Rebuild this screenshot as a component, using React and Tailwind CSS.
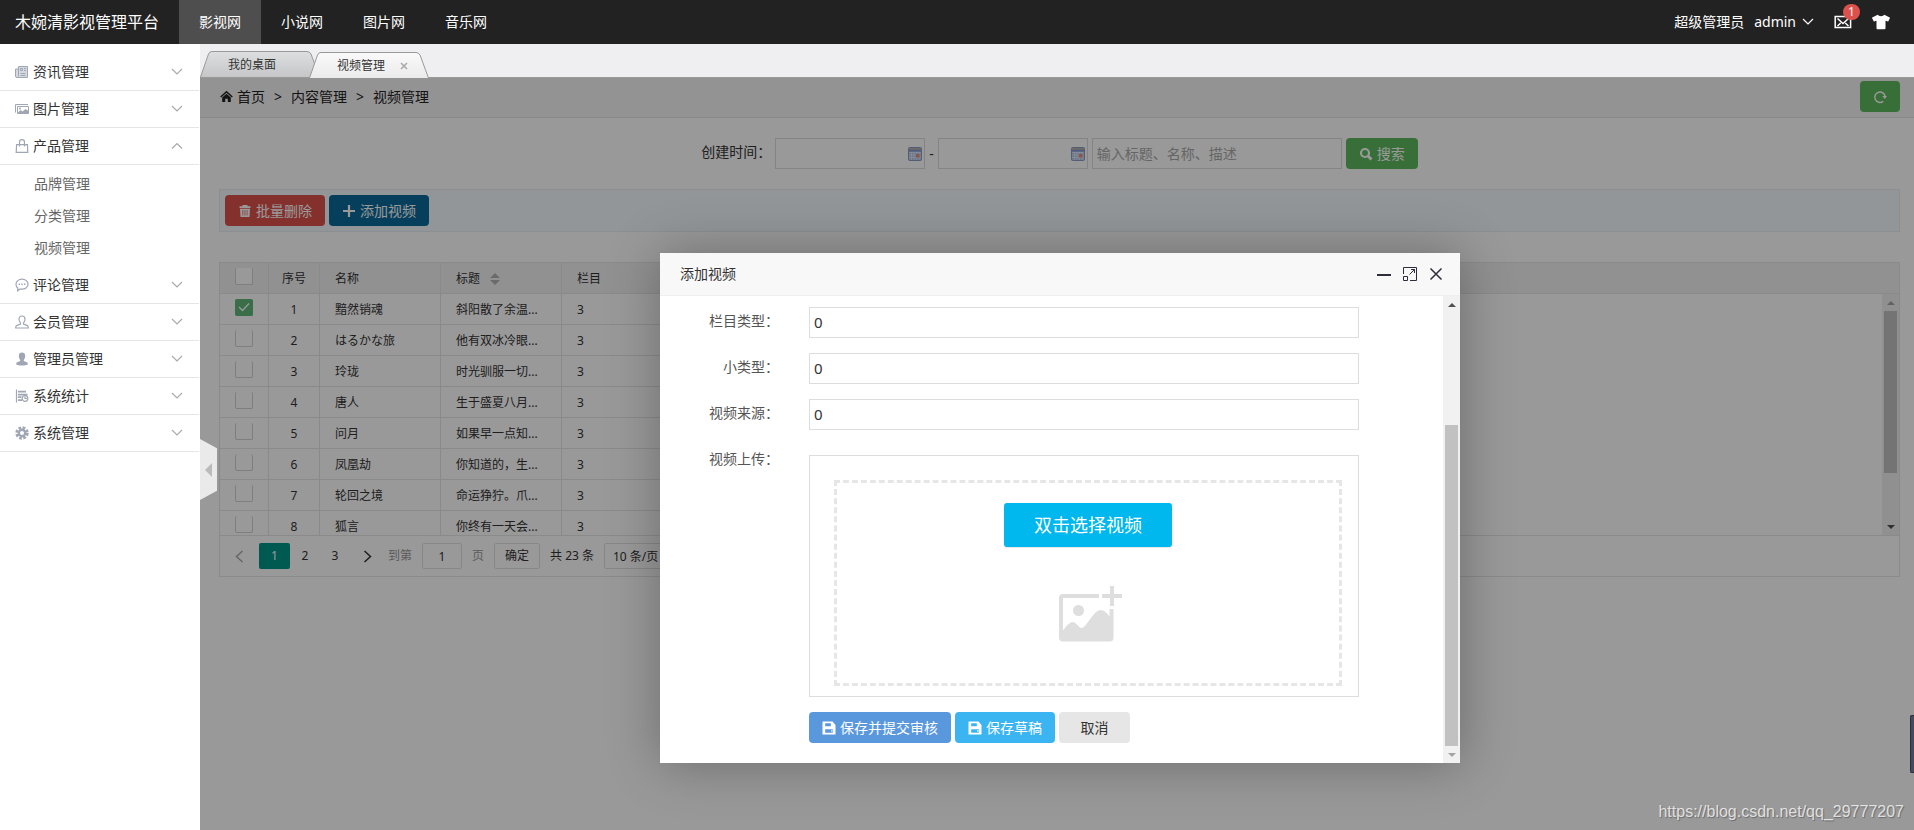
import { useState } from 'react';
import { FaTshirt } from 'react-icons/fa';

const SITES = ['影视网', '小说网', '图片网', '音乐网'];

const MENU = [
  { name: '资讯管理', icon: NewsIcon },
  { name: '图片管理', icon: PictureIcon },
  { name: '产品管理', icon: BagIcon, children: ['品牌管理', '分类管理', '视频管理'] },
  { name: '评论管理', icon: CommentIcon },
  { name: '会员管理', icon: MemberIcon },
  { name: '管理员管理', icon: AdminIcon },
  { name: '系统统计', icon: StatsIcon },
  { name: '系统管理', icon: GearIcon },
];

const VIDEOS = [
  { name: '黯然销魂', title: '斜阳散了余温...', column: 3 },
  { name: 'はるかな旅', title: '他有双冰冷眼...', column: 3 },
  { name: '玲珑', title: '时光驯服一切...', column: 3 },
  { name: '唐人', title: '生于盛夏八月...', column: 3 },
  { name: '问月', title: '如果早一点知...', column: 3 },
  { name: '凤凰劫', title: '你知道的，生...', column: 3 },
  { name: '轮回之境', title: '命运狰狞。爪...', column: 3 },
  { name: '狐言', title: '你终有一天会...', column: 3 },
];

const FIELDS = [
  { id: 'column-type', label: '栏目类型：' },
  { id: 'sub-type', label: '小类型：' },
  { id: 'video-source', label: '视频来源：' },
];

/* ---------- icons ---------- */

function NewsIcon() {
  return (
    <svg width="14" height="14" viewBox="0 0 14 14" fill="none" stroke="currentColor" aria-hidden="true">
      <path d="M3.500 1.500h9v11H2A1.500 1.500 0 0 1 .500 11V4h3z" fill="#d5d9e0" />
      <path d="M3.500 4v7.500M5.500 8.500h5M5.500 10.500h5M9 3.500h2M9 5.500h2" />
      <path d="M5.500 3.500h2v2h-2z" />
    </svg>
  );
}

function PictureIcon() {
  return (
    <svg width="14" height="14" viewBox="0 0 14 14" fill="none" stroke="currentColor" aria-hidden="true">
      <path d="M.500 10.500v-8h12.500" />
      <path d="M2.500 4.500h11v7h-11z" />
      <path d="M3 10.500l2.500-2.500 2 1.500L10.500 7 13.500 9v2.500H3z" fill="currentColor" stroke="none" />
      <circle cx="5" cy="6.500" r="1" fill="currentColor" stroke="none" />
    </svg>
  );
}

function BagIcon() {
  return (
    <svg width="14" height="14" viewBox="0 0 14 14" fill="none" stroke="currentColor" strokeWidth="1.200" aria-hidden="true">
      <path d="M1.600 5.600h10.800l.400 7.800H1.200z" />
      <path d="M4.500 7.500V3.200a2.500 2.500 0 0 1 5 0v4.300" />
    </svg>
  );
}

function CommentIcon() {
  return (
    <svg width="14" height="14" viewBox="0 0 14 14" fill="none" stroke="currentColor" strokeWidth="1.200" aria-hidden="true">
      <path d="M7 1.200c3.400 0 6 2.200 6 5s-2.600 5-6 5c-.6 0-1.200-.1-1.800-.2L2.600 12.800l.2-2.700C1.600 9.200 1 7.800 1 6.200c0-2.800 2.600-5 6-5z" />
      <path d="M3.600 6.300h1.400M6.300 6.300h1.400M9 6.300h1.400" strokeWidth="1.500" />
    </svg>
  );
}

function MemberIcon() {
  return (
    <svg width="14" height="14" viewBox="0 0 14 14" fill="none" stroke="currentColor" strokeWidth="1.200" aria-hidden="true">
      <path d="M5.500 8C4.300 6.800 4 5.500 4 4c0-1.800 1.200-3 3-3s3 1.200 3 3c0 1.500-.3 2.800-1.500 4v1l4 1.600c.6.3.8 1 .8 2.400H.7c0-1.400.2-2.100.8-2.400L5.500 9z" />
    </svg>
  );
}

function AdminIcon() {
  return (
    <svg width="14" height="14" viewBox="0 0 14 14" fill="currentColor" aria-hidden="true">
      <path d="M5.200 8C4.300 6.900 3.800 5.500 3.800 3.800 3.800 1.800 5.200.6 7 .6s3.200 1.200 3.200 3.200c0 1.700-.5 3.100-1.400 4.200v1l3 1.200c.8.4 1 1.200 1 2.200-1.400.8-3.500 1.100-5.800 1.100s-4.400-.3-5.800-1.100c0-1 .2-1.800 1-2.200l3-1.200z" />
    </svg>
  );
}

function StatsIcon() {
  return (
    <svg width="14" height="14" viewBox="0 0 14 14" fill="none" stroke="currentColor" strokeWidth="1.200" aria-hidden="true">
      <path d="M1.500.5v13" />
      <path d="M3 2.700h8M3 5.700h9.500M3 8.200h3.500M3 11.200h4" strokeWidth="1.700" />
      <circle cx="10" cy="9.500" r="2.800" />
      <path d="M10 7.500v2h2" />
    </svg>
  );
}

function GearIcon() {
  return (
    <svg width="14" height="14" viewBox="0 0 14 14" fill="none" stroke="currentColor" aria-hidden="true">
      <circle cx="7" cy="7" r="5.200" strokeWidth="3" strokeDasharray="2.600 1.484" />
      <circle cx="7" cy="7" r="3.200" strokeWidth="2.400" />
    </svg>
  );
}

function Chevron({ up = false }) {
  return (
    <svg width="12" height="8" viewBox="0 0 12 8" fill="none" stroke="currentColor" strokeWidth="1.200" aria-hidden="true">
      <path d={up ? 'M1 6.500l5-5 5 5' : 'M1 1l5 5 5-5'} />
    </svg>
  );
}

function HomeIcon() {
  return (
    <svg width="13" height="13" viewBox="0 0 13 13" fill="currentColor" aria-hidden="true">
      <path d="M6.500.8l6.300 5.700-1 1-5.300-4.700L1.200 7.500l-1-1z" />
      <path d="M6.500 3.800l4.300 3.800V12H7.800V8.800H5.200V12H2.200V7.600z" />
    </svg>
  );
}

function TrashIcon() {
  return (
    <svg width="14" height="14" viewBox="0 0 14 14" fill="currentColor" aria-hidden="true">
      <path d="M1.500 4V2.300h3V1h5v1.300h3V4z" />
      <path fillRule="evenodd" d="M2 4.700h10l-.5 8.300h-9zM4.500 6v5.500h.7V6zm2.100 0v5.500h.7V6zm2.100 0v5.500h.7V6z" />
    </svg>
  );
}

function PlusIcon() {
  return (
    <svg width="14" height="14" viewBox="0 0 14 14" fill="none" stroke="currentColor" strokeWidth="2.200" aria-hidden="true">
      <path d="M7 1v12M1 7h12" />
    </svg>
  );
}

function SearchIcon() {
  return (
    <svg width="14" height="14" viewBox="0 0 14 14" fill="none" stroke="currentColor" strokeWidth="2.200" aria-hidden="true">
      <circle cx="6" cy="6" r="4" />
      <path d="M9 9l3.500 3.500" strokeWidth="2.800" />
    </svg>
  );
}

function RefreshIcon() {
  return (
    <svg width="14" height="14" viewBox="0 0 14 14" fill="none" stroke="currentColor" strokeWidth="1.500" aria-hidden="true">
      <path d="M10.200 11.300A5.200 5.200 0 1 1 12.200 7" />
      <path d="M9.300 6h4.700l-2.200 3z" fill="currentColor" stroke="none" />
    </svg>
  );
}

function SaveIcon() {
  return (
    <svg width="14" height="14" viewBox="0 0 14 14" fill="currentColor" aria-hidden="true">
      <path fillRule="evenodd" d="M1 .5h9.500L13.500 4v9.500H.5V1zM3.200 2.300v2.900h5.600V2.300zM3.200 8.200v3.500h7.600V8.200zM9.300 9h1v1.800h-1z" />
    </svg>
  );
}

function CalendarIcon() {
  return (
    <svg width="14" height="14" viewBox="0 0 14 14" className="shrink-0" aria-hidden="true">
      <rect x=".5" y=".5" width="13" height="13" rx="1" fill="#b4c6e8" stroke="#8c9cc0" />
      <path d="M1 1h12v2H1z" fill="#b5b0ae" />
      <path d="M1 3h12v1.500H1z" fill="#7f98d0" />
      <path d="M1 5.500h12M1 8h12M1 10.500h12M3.500 5v8M6 5v8M8.500 5v8M11 5v8" stroke="#e2ebfa" strokeWidth=".8" />
      <path d="M8 7h3.500v3.500H8z" fill="#e0907a" />
    </svg>
  );
}

function MailIcon() {
  return (
    <svg width="18" height="14" viewBox="0 0 18 14" fill="none" stroke="currentColor" strokeWidth="1.500" aria-hidden="true">
      <path d="M1.200 1.500h15.400v11H1.200z" />
      <path d="M3.500 3.500L9 8.500l5.500-5M3.500 11l3.200-3M14.500 11l-3.200-3" />
    </svg>
  );
}

function AddPictureIcon() {
  return (
    <svg width="64" height="56" viewBox="0 0 64 56" fill="#dedede" aria-hidden="true">
      <path d="M3.500 8H40v4H4v32.500c3-4 6.500-8.500 9.500-8.500 4 0 6 6 9 6 5 0 12-18 19-18 4 0 6.500 3 9 6.500V23h4v29c0 2-1 3.500-3.500 3.500h-47C1.500 55.500 0 54 0 52V11.500C0 9.500 1.500 8 3.500 8z" />
      <circle cx="19.500" cy="24.500" r="5.500" />
      <path d="M51 0h4v8h8v4h-8v8h-4v-8h-8V8h8z" />
    </svg>
  );
}

/* ---------- shared bits ---------- */

function Button({ className, children, ...rest }) {
  return (
    <button
      type="button"
      className={`flex h-[31px] items-center gap-1 rounded px-[13px] text-sm ${className}`}
      {...rest}
    >
      {children}
    </button>
  );
}

function ScrollTrack({ children }) {
  return (
    <div className="flex w-[17px] shrink-0 flex-col items-center bg-[#f1f1f1]" aria-hidden="true">
      {children}
    </div>
  );
}

function ScrollArrow({ down = false, className }) {
  return (
    <span className={`flex h-[17px] shrink-0 items-center justify-center ${className}`}>
      <svg width="8" height="4" viewBox="0 0 8 4" fill="currentColor">
        <path d={down ? 'M0 0h8L4 4z' : 'M0 4h8L4 0z'} />
      </svg>
    </span>
  );
}

function Check({ label, checked, onChange }) {
  return (
    <label className="mx-auto grid w-[18px]">
      <input
        type="checkbox"
        aria-label={label}
        checked={checked}
        onChange={onChange}
        className="col-start-1 row-start-1 h-[17px] w-[18px] appearance-none rounded-xs border border-t-0 border-[#d2d2d2] bg-white checked:border-[#5fb878] checked:bg-[#5fb878]"
      />
      {checked && (
        <svg className="pointer-events-none col-start-1 row-start-1 text-white" width="18" height="17" viewBox="0 0 18 17" fill="none" stroke="currentColor" strokeWidth="1.300" aria-hidden="true">
          <path d="M4 8l3.500 3.500L14 4.500" />
        </svg>
      )}
    </label>
  );
}

/* ---------- page parts ---------- */

function Header() {
  return (
    <header className="flex h-11 items-center bg-[#222] pl-[15px] pr-6 text-sm text-white">
      <a href="#" className="mr-5 text-base">木婉清影视管理平台</a>
      <nav className="flex h-full flex-1">
        {SITES.map((site, i) => (
          <a
            key={site}
            href="#"
            className={`flex items-center px-5 ${i === 0 ? 'bg-[#4e4e4e]' : ''}`}
          >
            {site}
          </a>
        ))}
      </nav>
      <div className="flex items-center">
        <span>超级管理员</span>
        <button type="button" className="ml-2.5 flex items-center gap-1.5">
          admin <Chevron />
        </button>
        <a href="#" aria-label="消息" className="relative ml-5">
          <MailIcon />
          <span className="absolute -top-[11px] left-[9px] flex h-4 w-[17px] items-center justify-center rounded-full bg-[#dd514c] text-xs">1</span>
        </a>
        <button type="button" aria-label="换肤" className="ml-5">
          <FaTshirt size={18} />
        </button>
      </div>
    </header>
  );
}

function Sidebar() {
  return (
    <aside className="w-[200px] shrink-0 bg-white pr-px pt-2.5 text-sm text-[#333]">
      {MENU.map(({ name, icon: Icon, children }) => (
        <div key={name}>
          <button type="button" className="flex h-[37px] w-full items-center border-b border-[#e5e5e5] pl-[15px] pr-4">
            <span className="mr-1 text-[#a0a6b3]"><Icon /></span>
            <span className="flex-1 text-left">{name}</span>
            <span className="text-[#aaa]"><Chevron up={Boolean(children)} /></span>
          </button>
          {children && (
            <ul className="py-[3px]">
              {children.map((child) => (
                <li key={child}>
                  <a href="#" className="flex h-8 items-center pl-[34px] text-[#666]">{child}</a>
                </li>
              ))}
            </ul>
          )}
        </div>
      ))}
    </aside>
  );
}

function Tab({ name, active = false }) {
  return (
    <li className={`relative flex h-[26px] w-[120px] items-center pl-7 pt-0.5 ${active ? '-mb-px -ml-[11px]' : ''}`}>
      <svg className="absolute inset-0" width="120" height="26" viewBox="0 0 120 26" aria-hidden="true">
        <defs>
          <linearGradient id={active ? 'tab-on' : 'tab-off'} x1="0" y1="0" x2="0" y2="1">
            <stop offset="0" stopColor={active ? '#fafafa' : '#dcdfdf'} />
            <stop offset="1" stopColor={active ? '#ebebeb' : '#c6c6c8'} />
          </linearGradient>
        </defs>
        <path
          d="M.500 26L8.500 3Q9.500.500 12 .500H107Q109.500.500 111 3L119.500 26"
          fill={active ? 'url(#tab-on)' : 'url(#tab-off)'}
          stroke="#999"
        />
      </svg>
      <a href="#" className="relative text-xs text-[#333]">{name}</a>
      {active && (
        <button type="button" aria-label="关闭标签" className="relative ml-[15px] text-[#aaa]">
          <svg width="8" height="8" viewBox="0 0 8 8" fill="none" stroke="currentColor" strokeWidth="1.600">
            <path d="M1 1l6 6M7 1L1 7" />
          </svg>
        </button>
      )}
    </li>
  );
}

function Breadcrumb() {
  return (
    <nav className="flex h-10 items-center border-b border-[#e5e5e5] bg-[#f5f5f5] pb-0.5 pl-5 pr-3.5 text-sm text-[#222]">
      <a href="#" className="flex items-center gap-1"><HomeIcon />首页</a>
      <span className="mx-[9px]">&gt;</span>
      <a href="#">内容管理</a>
      <span className="mx-[9px]">&gt;</span>
      <span className="flex-1">视频管理</span>
      <Button aria-label="刷新" className="bg-[#5eb95e] text-white"><RefreshIcon /></Button>
    </nav>
  );
}

function DateInput({ id, label }) {
  return (
    <div className="flex h-[31px] w-[150px] items-center border border-[#ddd] px-0.5">
      <input id={id} type="text" aria-label={label} className="min-w-0 flex-1 text-sm outline-none" />
      <CalendarIcon />
    </div>
  );
}

function SearchBar() {
  return (
    <form className="flex justify-center gap-1 text-sm text-[#333]">
      <label htmlFor="date-from" className="leading-[27px]">创建时间：</label>
      <DateInput id="date-from" label="开始时间" />
      <span className="leading-[31px]">-</span>
      <DateInput id="date-to" label="结束时间" />
      <input
        type="text"
        aria-label="关键字"
        placeholder="输入标题、名称、描述"
        className="h-[31px] w-[250px] border border-[#ddd] px-1 placeholder:text-[#a9a9a9]"
      />
      <Button className="bg-[#5eb95e] text-white"><SearchIcon />搜索</Button>
    </form>
  );
}

function Columns() {
  return (
    <colgroup>
      <col className="w-[49px]" />
      <col className="w-[51px]" />
      <col className="w-[121px]" />
      <col className="w-[121px]" />
      <col className="w-[121px]" />
    </colgroup>
  );
}

function VideoTable() {
  const [selected, setSelected] = useState([0]);
  const all = selected.length === VIDEOS.length;

  const toggle = (i) =>
    setSelected(selected.includes(i) ? selected.filter((n) => n !== i) : [...selected, i]);

  const head = 'h-[30px] border-r border-[#e6e6e6] px-[15px] pt-0.5 text-left font-normal';
  const cell = 'h-[31px] border-b border-r border-[#e6e6e6] px-[15px] pt-0.5';

  return (
    <div className="mt-[30px] border border-[#e6e6e6] text-xs text-[#333]">
      <div className="border-b border-[#e6e6e6] bg-[#f2f2f2]">
        <table className="w-[463px] table-fixed border-separate border-spacing-0">
          <Columns />
          <thead>
            <tr>
              <th className="border-r border-[#e6e6e6] pt-[5px] align-top">
                <Check
                  label="全选"
                  checked={all}
                  onChange={() => setSelected(all ? [] : VIDEOS.map((_, i) => i))}
                />
              </th>
              <th className="h-[30px] border-r border-[#e6e6e6] pt-0.5 font-normal">序号</th>
              <th className={head}>名称</th>
              <th className={head}>
                <span className="flex items-center gap-2.5">
                  标题
                  <svg width="10" height="12" viewBox="0 0 10 12" fill="#b2b2b2" aria-hidden="true">
                    <path d="M0 5h10L5 0zM0 7h10l-5 5z" />
                  </svg>
                </span>
              </th>
              <th className={head}>栏目</th>
            </tr>
          </thead>
        </table>
      </div>
      <div className="flex h-[241px]">
        <div className="min-w-0 flex-1 overflow-hidden">
          <table className="w-[463px] table-fixed border-separate border-spacing-0">
            <Columns />
            <tbody>
              {VIDEOS.map((video, i) => (
                <tr key={video.name}>
                  <td className="border-b border-r border-[#e6e6e6] pt-[5px] align-top">
                    <Check label={`选择 ${video.name}`} checked={selected.includes(i)} onChange={() => toggle(i)} />
                  </td>
                  <td className="h-[31px] border-b border-r border-[#e6e6e6] pt-0.5 text-center">{i + 1}</td>
                  <td className={cell}>{video.name}</td>
                  <td className={cell}>{video.title}</td>
                  <td className={cell}>{video.column}</td>
                </tr>
              ))}
            </tbody>
          </table>
        </div>
        <ScrollTrack>
          <ScrollArrow className="text-[#a3a3a3]" />
          <span className="h-[162px] w-[13px] bg-[#c1c1c1]" />
          <span className="flex-1" />
          <ScrollArrow down className="text-[#505050]" />
        </ScrollTrack>
      </div>
      <Pager />
    </div>
  );
}

function Pager() {
  return (
    <div className="flex h-[41px] items-center gap-2.5 border-t border-[#e6e6e6]">
      <div className="flex h-[26px]">
        <button type="button" aria-label="上一页" className="flex w-[39px] items-center justify-center text-[#aaa]">
          <svg width="9" height="13" viewBox="0 0 9 13" fill="none" stroke="currentColor" strokeWidth="1.500"><path d="M7.500 1L1.500 6.500l6 5.500" /></svg>
        </button>
        <button type="button" className="w-[31px] rounded-xs bg-[#009688] text-white">1</button>
        <button type="button" className="w-[30px]">2</button>
        <button type="button" className="w-[30px]">3</button>
        <button type="button" aria-label="下一页" className="flex w-7 items-center justify-end pr-1.5">
          <svg width="9" height="13" viewBox="0 0 9 13" fill="none" stroke="currentColor" strokeWidth="1.500"><path d="M1.500 1l6 5.500-6 5.500" /></svg>
        </button>
      </div>
      <label htmlFor="page-no" className="text-[#999]">到第</label>
      <input id="page-no" type="text" defaultValue="1" className="h-[26px] w-10 rounded-xs border border-[#e2e2e2] text-center" />
      <span className="text-[#999]">页</span>
      <button type="button" className="h-[26px] w-[46px] rounded-xs border border-[#e2e2e2]">确定</button>
      <span>共 23 条</span>
      <select aria-label="每页条数" className="h-[26px] rounded-xs border border-[#e2e2e2] px-1">
        <option>10 条/页</option>
        <option>20 条/页</option>
        <option>50 条/页</option>
      </select>
    </div>
  );
}

function AddVideoDialog({ onClose }) {
  return (
    <section
      role="dialog"
      aria-labelledby="dialog-title"
      className="w-[800px] self-start bg-white text-sm text-[#333] shadow-[1px_1px_50px_rgba(0,0,0,0.3)]"
    >
      <header className="flex h-[43px] items-center gap-3 border-b border-[#eee] bg-[#f8f8f8] pl-5 pr-[17px] text-[#2e2d3c]">
        <h2 id="dialog-title" className="flex-1 text-[#333]">添加视频</h2>
        <button type="button" aria-label="最小化">
          <svg width="14" height="14" viewBox="0 0 14 14" fill="currentColor"><path d="M0 7h14v2H0z" /></svg>
        </button>
        <button type="button" aria-label="最大化">
          <svg width="14" height="14" viewBox="0 0 14 14" fill="none" stroke="currentColor">
            <path d="M.5 7V.5h13v13H7M.5 9.500h4v4h-4zM6.500 7.500l5-5M8 2.500h3.500V6" />
          </svg>
        </button>
        <button type="button" aria-label="关闭" onClick={onClose}>
          <svg width="14" height="14" viewBox="0 0 14 14" fill="none" stroke="currentColor" strokeWidth="1.500"><path d="M1.500 1.500l11 11M12.500 1.500l-11 11" /></svg>
        </button>
      </header>
      <div className="flex">
        <form className="flex flex-1 flex-col gap-[15px] pb-5 pr-[84px] pt-[11px]">
          {FIELDS.map(({ id, label }) => (
            <div key={id} className="flex gap-[30px]">
              <label htmlFor={id} className="w-[119px] text-right leading-7 text-[#555]">{label}</label>
              <input id={id} type="text" defaultValue="0" className="h-[31px] min-w-0 flex-1 border border-[#ddd] px-1 pb-0.5 text-[15px]" />
            </div>
          ))}
          <div className="flex gap-[30px]">
            <span className="w-[119px] text-right leading-7 text-[#555]">视频上传：</span>
            <div className="mt-2.5 flex-1 border border-[#ddd] pb-2.5 pl-6 pr-4 pt-6">
              <div className="flex h-[206px] flex-col items-center border-[3px] border-dashed border-[#e6e6e6] pt-5">
                <button type="button" className="h-11 w-[168px] rounded-[3px] bg-[#00b7ee] text-lg text-white shadow-[0_1px_1px_rgba(0,0,0,0.1)]">
                  双击选择视频
                </button>
                <div className="pl-1.5 pt-[39px]"><AddPictureIcon /></div>
              </div>
            </div>
          </div>
          <div className="flex gap-1 pl-[149px]">
            <Button className="bg-[#5a98de] text-white"><SaveIcon />保存并提交审核</Button>
            <Button className="bg-[#3bb4f2] text-white"><SaveIcon />保存草稿</Button>
            <Button className="w-[71px] justify-center bg-[#e6e6e6]" onClick={onClose}>取消</Button>
          </div>
        </form>
        <ScrollTrack>
          <ScrollArrow className="text-[#505050]" />
          <span className="flex-1" />
          <span className="h-[321px] w-[13px] bg-[#c1c1c1]" />
          <ScrollArrow down className="text-[#a3a3a3]" />
        </ScrollTrack>
      </div>
    </section>
  );
}

export default function App() {
  const [adding, setAdding] = useState(true);

  return (
    <div className="relative flex min-h-screen flex-col overflow-hidden font-['Noto_Sans','Noto_Sans_CJK_SC',sans-serif]">
      <Header />
      <div className="flex flex-1">
        <Sidebar />
        <div className="relative flex min-w-0 flex-1 flex-col">
          <ul className="flex h-[34px] items-end border-b border-[#999] bg-[#efeef0]">
            <Tab name="我的桌面" />
            <Tab name="视频管理" active />
          </ul>
          <main className="relative flex-1 bg-white">
            <Breadcrumb />
            <div className="pb-10 pl-[19px] pr-3.5 pt-5">
              <SearchBar />
              <div className="mt-5 flex gap-1 border border-[#e8eef2] bg-[#f5fafe] p-[5px]">
                <Button className="bg-[#dd514c] text-white"><TrashIcon />批量删除</Button>
                <Button className="bg-[#0a6999] text-white" onClick={() => setAdding(true)}><PlusIcon />添加视频</Button>
              </div>
              <VideoTable />
            </div>
            {adding && (
              <div className="absolute inset-0 flex justify-center overflow-hidden bg-black/40 pl-5 pr-3.5 pt-[175px]">
                <AddVideoDialog onClose={() => setAdding(false)} />
              </div>
            )}
          </main>
          <button
            type="button"
            aria-label="收起菜单"
            className="absolute left-0 top-[395px] flex h-[61px] w-[17px] items-center justify-center bg-[#eaeaea] text-[#bbb] [clip-path:polygon(0_0,100%_15%,100%_85%,0_100%)]"
          >
            <svg width="7" height="14" viewBox="0 0 7 14" fill="currentColor"><path d="M7 0v14L0 7z" /></svg>
          </button>
        </div>
      </div>
      <span className="absolute bottom-[57px] right-0 h-[58px] w-1 rounded-l-xs border border-r-0 border-[#2c2e3c] bg-[#464a5e]" />
      <span className="absolute bottom-1.5 right-2.5 font-['Liberation_Sans',sans-serif] text-base text-white/75 [text-shadow:1px_1px_1px_rgba(0,0,0,0.3)]">
        https://blog.csdn.net/qq_29777207
      </span>
    </div>
  );
}
